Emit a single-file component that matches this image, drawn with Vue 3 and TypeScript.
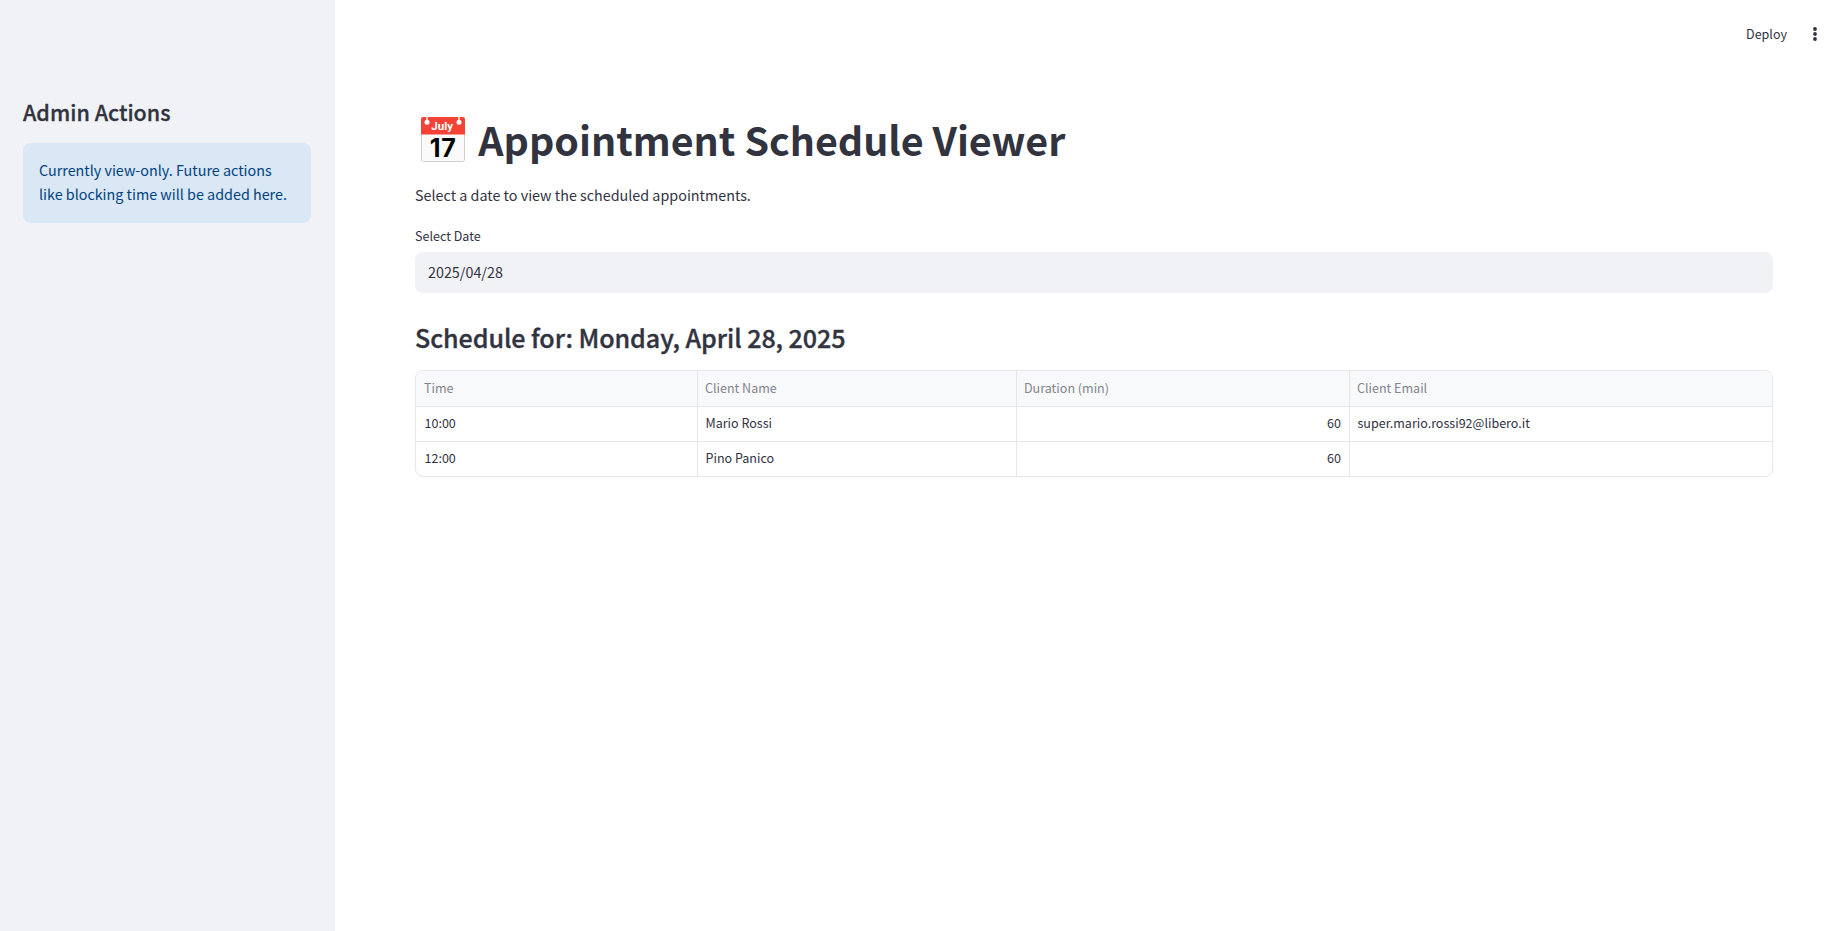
<script setup lang="ts">
interface Appointment {
  time: string
  client: string
  duration: number
  email: string
}

const appointments: Appointment[] = [
  { time: '10:00', client: 'Mario Rossi', duration: 60, email: 'super.mario.rossi92@libero.it' },
  { time: '12:00', client: 'Pino Panico', duration: 60, email: '' },
]
</script>

<template>
  <div class="app">
    <aside class="sidebar">
      <h2 class="side-title">Admin Actions</h2>
      <div class="info">Currently view-only. Future actions<br />like blocking time will be added here.</div>
    </aside>

    <div class="page">
      <header class="toolbar">
        <button class="deploy" type="button">Deploy</button>
        <button class="menu" type="button" aria-label="Menu">
          <svg width="4" height="14" viewBox="0 0 4 14">
            <circle cx="2" cy="2" r="1.9" />
            <circle cx="2" cy="7" r="1.9" />
            <circle cx="2" cy="12" r="1.9" />
          </svg>
        </button>
      </header>

      <main class="content">
        <h1 class="title">
          <svg class="calendar" width="44" height="46" viewBox="0 0 44 46">
            <rect x="0.5" y="2" width="43" height="42.5" rx="2" fill="#fafafa" stroke="#cfcfcf" />
            <path d="M0 2a2 2 0 0 1 2-2h40a2 2 0 0 1 2 2v15.5H0z" fill="#f44336" />
            <path d="M6 0v5M38 0v5" stroke="#fff" stroke-width="1.4" />
            <circle cx="6" cy="5.2" r="2.5" fill="#fff" />
            <circle cx="38" cy="5.2" r="2.5" fill="#fff" />
            <text class="month" x="21.2" y="12.7" text-anchor="middle">July</text>
            <text class="day" x="21.7" y="40.3" text-anchor="middle" textLength="26">17</text>
          </svg>
          <span>Appointment Schedule Viewer</span>
        </h1>
        <p class="lead">Select a date to view the scheduled appointments.</p>
        <label class="label">Select Date</label>
        <div class="date-input">2025/04/28</div>
        <h3 class="subtitle">Schedule for: Monday, April 28, 2025</h3>

        <div class="grid">
          <div class="row head">
            <div>Time</div>
            <div>Client Name</div>
            <div>Duration (min)</div>
            <div>Client Email</div>
          </div>
          <div v-for="a in appointments" :key="a.time" class="row">
            <div>{{ a.time }}</div>
            <div>{{ a.client }}</div>
            <div class="num">{{ a.duration }}</div>
            <div>{{ a.email }}</div>
          </div>
        </div>
      </main>
    </div>
  </div>
</template>

<style>
body {
  margin: 0;
}
</style>

<style scoped>
.app {
  display: flex;
  height: 100vh;
  overflow: hidden;
  background: #fff;
  color: #31333f;
  font-family: 'Noto Sans CJK SC', 'Noto Sans', sans-serif;
  font-size: 14.33px;
  line-height: 24px;
  white-space: nowrap;
}
h1, h2, h3, p {
  margin: 0;
}
.sidebar {
  box-sizing: border-box;
  width: 335px;
  flex: none;
  padding: 97px 24px 0 23px;
  background: #f0f2f6;
}
.side-title {
  font-size: 21.5px;
  font-weight: 500;
  line-height: 29px;
  -webkit-text-stroke: 0.3px #31333f;
}
.info {
  margin-top: 17px;
  padding: 15px 16px 17px;
  border-radius: 8px;
  background: #dae7f4;
  color: #004280;
}
.page {
  flex: 1;
  min-width: 0;
}
.toolbar {
  display: flex;
  align-items: center;
  justify-content: flex-end;
  height: 60px;
  padding: 4px 30px 0 0;
}
.toolbar button {
  padding: 0;
  border: 0;
  background: none;
  color: inherit;
  font: inherit;
}
.toolbar .deploy {
  font-size: 12.54px;
  line-height: 20px;
}
.toolbar .menu {
  display: flex;
  margin-left: 26px;
}
.menu svg {
  fill: #31333f;
}
.content {
  padding: 48px 74px 0 80px;
}
.title {
  display: flex;
  align-items: flex-start;
  height: 53px;
  font-size: 39.4px;
  font-weight: 700;
  line-height: 54px;
}
.calendar {
  margin: 5px 13.3px 0 6px;
}
.month {
  font: 700 11.5px Roboto, sans-serif;
  fill: #fff;
}
.day {
  font: 700 25px Inter, sans-serif;
  fill: #000;
}
.lead {
  margin-top: 18px;
}
.label {
  display: block;
  margin-top: 19px;
  font-size: 12.54px;
  line-height: 20px;
}
.date-input {
  height: 41px;
  margin-top: 6px;
  padding-left: 13px;
  border-radius: 8px;
  background: #f0f2f6;
  line-height: 40px;
}
.subtitle {
  margin-top: 27px;
  font-size: 25.07px;
  font-weight: 500;
  line-height: 34px;
  letter-spacing: -0.06px;
  -webkit-text-stroke: 0.35px #31333f;
}
.grid {
  margin-top: 16px;
  overflow: hidden;
  border: 1px solid #e6e7e9;
  border-radius: 8px;
  font-size: 12.54px;
}
.row {
  display: grid;
  grid-template-columns: 281px 319px 333px 1fr;
  height: 34px;
  line-height: 32px;
}
.row + .row {
  border-top: 1px solid #e6e7e9;
}
.row > div {
  padding: 0 8px 0 8.5px;
}
.row > div + div {
  padding-left: 7.5px;
  border-left: 1px solid #e6e7e9;
}
.row.head {
  height: 35px;
  line-height: 34px;
  background: #f8f9fb;
  color: #83848c;
}
.row.head > div {
  padding-left: 8px;
}
.row.head > div + div {
  padding-left: 7px;
}
.row .num {
  text-align: right;
}
</style>
